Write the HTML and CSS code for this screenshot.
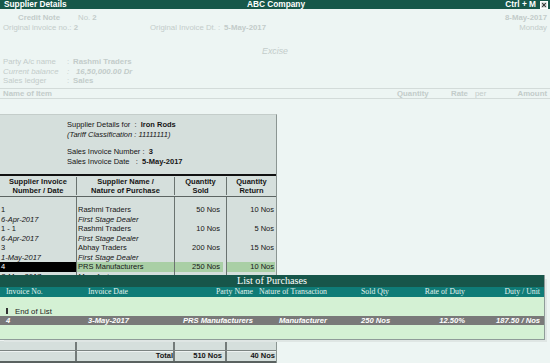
FILE: index.html
```html
<!DOCTYPE html>
<html lang="en">
<head>
    <meta charset="UTF-8">
    <title>Supplier Details - ABC Company</title>
    <link rel="stylesheet" href="styles.css">
</head>
<body>

<div class="screen">
    <div class="titlebar">
        <span class="title-left">Supplier Details</span>
        <span class="title-center">ABC Company</span>
        <span class="title-right">Ctrl + M
            <svg class="close-box" width="8" height="8" viewBox="0 0 8 8">
                <rect x="0.5" y="0.5" width="7" height="7" fill="#dfe5e3" stroke="#ffffff"/>
                <path d="M2.2 2.2L5.8 5.8M5.8 2.2L2.2 5.8" stroke="#333" stroke-width="1.1"/>
            </svg>
        </span>
    </div>

    <!-- voucher behind the popup, greyed out -->
    <div class="voucher">
        <div class="v-row row-first">
            <span class="v-type"><b>Credit Note</b></span>
            <span>No. <b>2</b></span>
            <span class="v-right"><b>8-May-2017</b></span>
        </div>
        <div class="v-row">
            <span class="v-orig">Original invoice no.: <b>2</b></span>
            <span class="v-orig-dt">Original Invoice Dt.</span>
            <span class="v-colon">:</span>
            <b>5-May-2017</b>
            <span class="v-right">Monday</span>
        </div>
        <div class="v-excise">Excise</div>
        <div class="v-row v-small">
            <span class="v-label">Party A/c name</span>
            <span class="v-colon">:</span>
            <b>Rashmi Traders</b>
        </div>
        <div class="v-row v-small v-italic">
            <span class="v-label">Current balance</span>
            <span class="v-colon">:</span>
            <b class="v-bal">16,50,000.00 Dr</b>
        </div>
        <div class="v-row v-small">
            <span class="v-label">Sales ledger</span>
            <span class="v-colon">:</span>
            <b>Sales</b>
        </div>
        <div class="v-items">
            <b class="v-name">Name of Item</b>
            <b class="v-qty">Quantity</b>
            <b class="v-rate">Rate</b>
            <span class="v-per">per</span>
            <b class="v-amt">Amount</b>
        </div>
    </div>

    <div class="panel">
        <div class="panel-info">
            <div>Supplier Details for&nbsp; : &nbsp;<b>Iron Rods</b></div>
            <div><i>(Tariff Classification : 11111111)</i></div>
            <div class="info-gap">Sales Invoice Number : &nbsp;<b>3</b></div>
            <div>Sales Invoice Date &nbsp; : &nbsp;<b>5-May-2017</b></div>
        </div>

        <div class="grid-head">
            <div class="cell c1">Supplier Invoice<br>Number / Date</div>
            <div class="cell c2">Supplier Name /<br>Nature of Purchase</div>
            <div class="cell c3">Quantity<br>Sold</div>
            <div class="cell c4">Quantity<br>Return</div>
        </div>

        <div class="grid-body">
            <div class="col c1">
                <div class="line">1</div>
                <div class="line it">6-Apr-2017</div>
                <div class="line">1 - 1</div>
                <div class="line it">6-Apr-2017</div>
                <div class="line">3</div>
                <div class="line it">1-May-2017</div>
                <div class="line cur">4</div>
                <div class="line it">3-May-2017</div>
            </div>
            <div class="col c2">
                <div class="line">Rashmi Traders</div>
                <div class="line it">First Stage Dealer</div>
                <div class="line">Rashmi Traders</div>
                <div class="line it">First Stage Dealer</div>
                <div class="line">Abhay Traders</div>
                <div class="line it">First Stage Dealer</div>
                <div class="line sel">PRS Manufacturers</div>
                <div class="line it">Manufacturer</div>
            </div>
            <div class="col c3 num">
                <div class="line">50 Nos</div>
                <div class="line"></div>
                <div class="line">10 Nos</div>
                <div class="line"></div>
                <div class="line">200 Nos</div>
                <div class="line"></div>
                <div class="line sel">250 Nos</div>
                <div class="line"></div>
            </div>
            <div class="col c4 num">
                <div class="line">10 Nos</div>
                <div class="line"></div>
                <div class="line">5 Nos</div>
                <div class="line"></div>
                <div class="line">15 Nos</div>
                <div class="line"></div>
                <div class="line sel">10 Nos</div>
                <div class="line"></div>
            </div>
        </div>

        <div class="grid-foot">
            <div class="foot-row">
                <div class="cell c1"></div>
                <div class="cell c2"></div>
                <div class="cell c3"></div>
                <div class="cell c4"></div>
            </div>
            <div class="foot-row total">
                <div class="cell c1"></div>
                <div class="cell c2 num">Total</div>
                <div class="cell c3 num">510 Nos</div>
                <div class="cell c4 num">40 Nos</div>
            </div>
        </div>
    </div>

    <!-- popup list over the panel -->
    <div class="list-popup">
        <div class="list-title">List of Purchases</div>
        <div class="list-row list-head">
            <span>Invoice No.</span>
            <span>Invoice Date</span>
            <span class="r">Party Name</span>
            <span class="r">Nature of Transaction</span>
            <span class="qty">Sold Qty</span>
            <span class="r">Rate of Duty</span>
            <span class="r">Duty / Unit</span>
        </div>
        <div class="list-body">
            <div class="end-list"><span class="end-mark"></span>End of List</div>
            <div class="list-row list-sel">
                <span>4</span>
                <span>3-May-2017</span>
                <span class="r">PRS Manufacturers</span>
                <span class="r">Manufacturer</span>
                <span class="qty">250 Nos</span>
                <span class="r">12.50%</span>
                <span class="r">187.50 / Nos</span>
            </div>
        </div>
    </div>
</div>

</body>
</html>
```

FILE: styles.css
```css
* {
    box-sizing: border-box;
}

body {
    margin: 0;
    font-family: "Liberation Sans", Arial, sans-serif;
    color: #151515;
}

.screen {
    position: relative;
    width: 550px;
    height: 363px;
    background: #edf5f3;
    overflow: hidden;
}

/* title bar */
.titlebar {
    height: 9px;
    background: #17584a;
    color: #fff;
    font-weight: bold;
    font-size: 8.3px;
    line-height: 9px;
    display: grid;
    grid-template-columns: 1fr auto 1fr;
    padding: 0 2px 0 4px;
}

.title-right {
    display: flex;
    justify-content: flex-end;
    align-items: center;
    gap: 4px;
}

/* faded voucher */
.voucher {
    height: 105px;
    padding-top: 4px;
    color: #c3ccca;
    font-size: 7.8px;
}

.v-row {
    display: flex;
    height: 10px;
    line-height: 10px;
    padding-left: 3px;
    padding-right: 3px;
}

.row-first {
    padding-left: 18px;
}

.v-type {
    width: 60px;
}

.v-right {
    margin-left: auto;
}

.v-orig {
    width: 147px;
}

.v-orig-dt {
    width: 68px;
}

.v-colon {
    width: 6px;
}

.v-excise {
    margin-top: 13px;
    height: 10px;
    line-height: 10px;
    text-align: center;
    font-style: italic;
    font-size: 8.8px;
}

.v-small {
    height: 9.5px;
    line-height: 9.5px;
}

.v-excise + .v-small {
    margin-top: 1.25px;
}

.v-label {
    width: 64px;
}

.v-italic {
    font-style: italic;
}

.v-bal {
    padding-left: 3px;
}

.v-items {
    display: flex;
    margin-top: 2.25px;
    height: 11px;
    line-height: 10px;
    border-top: 1px solid #d3dbd9;
    border-bottom: 1px solid #d3dbd9;
    padding: 0 3px;
}

.v-name {
    width: 394px;
}

.v-qty {
    width: 54px;
}

.v-rate {
    width: 24px;
}

.v-per {
    font-weight: normal;
}

.v-amt {
    margin-left: auto;
}

/* supplier panel */
.panel {
    width: 277px;
    height: 249px;
    background: #d5dfdc;
    border-top: 1px solid #c4cdca;
    border-right: 1px solid #8b9592;
    display: flex;
    flex-direction: column;
    font-size: 7.5px;
}

.panel-info {
    height: 59px;
    padding: 5px 0 0 67px;
    line-height: 9.5px;
}

.info-gap {
    margin-top: 8px;
}

.grid-head {
    display: flex;
    border-top: 2px solid #111;
    border-bottom: 1px solid #5c6462;
    padding: 1px 0;
    font-weight: bold;
    line-height: 9px;
    text-align: center;
}

.cell,
.col {
    border-right: 1px solid #6a7370;
}

.c1 {
    width: 77px;
}

.c2 {
    width: 98px;
}

.c3 {
    width: 52px;
}

.c4 {
    width: 49px;
    border-right: none;
}

.grid-body {
    flex: 1;
    display: flex;
    min-height: 0;
}

.col {
    padding-top: 8.25px;
}

.line {
    height: 9.5px;
    line-height: 9.5px;
    padding: 0 1px;
    white-space: nowrap;
}

.it {
    font-style: italic;
}

.num .line,
.num.cell {
    text-align: right;
}

.c3 .line,
.c3.num {
    padding-right: 3px;
}

.c4 .line,
.c4.num {
    padding-right: 1px;
}

.cur {
    background: #000;
    color: #fff;
}

.sel {
    background: #a9cfa5;
}

.grid-foot {
    height: 24px;
    border-bottom: 2px solid #5a6260;
}

.foot-row {
    display: flex;
    height: 11px;
    border-top: 1px solid #a3aca9;
}

.foot-row .cell {
    height: 10px;
    line-height: 10px;
    border-right: 2px solid #737b79;
    box-shadow: inset 0 1px 0 #eef3f2;
}

.foot-row .c4 {
    border-right: none;
}

.foot-row.total {
    border-top: 1px solid #7c8482;
    font-weight: bold;
}

/* list of purchases popup */
.list-popup {
    position: absolute;
    left: 0;
    top: 275px;
    width: 545px;
    height: 65px;
    background: #d4f1d4;
    border-right: 1px solid #8f9c99;
    border-bottom: 1px solid #8f9c99;
    box-shadow: 3px 3px 0 -1px #dfe6e4;
}

.list-title {
    height: 12px;
    line-height: 12px;
    background: #17564a;
    color: #fff;
    text-align: center;
    font-family: "Liberation Serif", "Times New Roman", serif;
    font-size: 10.2px;
}

.list-row {
    display: grid;
    grid-template-columns: 82px 70px 95px 74px 73px 65px 75px;
    padding-left: 6px;
    white-space: nowrap;
}

.list-row .r {
    text-align: right;
}

.list-row .qty {
    padding-left: 34px;
}

.list-head {
    height: 10px;
    line-height: 10px;
    background: #0f7c77;
    color: #e4f1ee;
    font-family: "Liberation Serif", "Times New Roman", serif;
    font-size: 7.8px;
}

.list-body {
    padding-top: 9px;
}

.end-list {
    display: flex;
    align-items: center;
    height: 10px;
    padding-left: 6px;
    font-size: 7.8px;
    color: #1c1c1c;
}

.end-mark {
    width: 2px;
    height: 6px;
    background: #333;
    margin-right: 7px;
}

.list-sel {
    height: 9px;
    line-height: 9px;
    background: #797979;
    color: #fff;
    font-weight: bold;
    font-style: italic;
    font-size: 7.6px;
}
```
